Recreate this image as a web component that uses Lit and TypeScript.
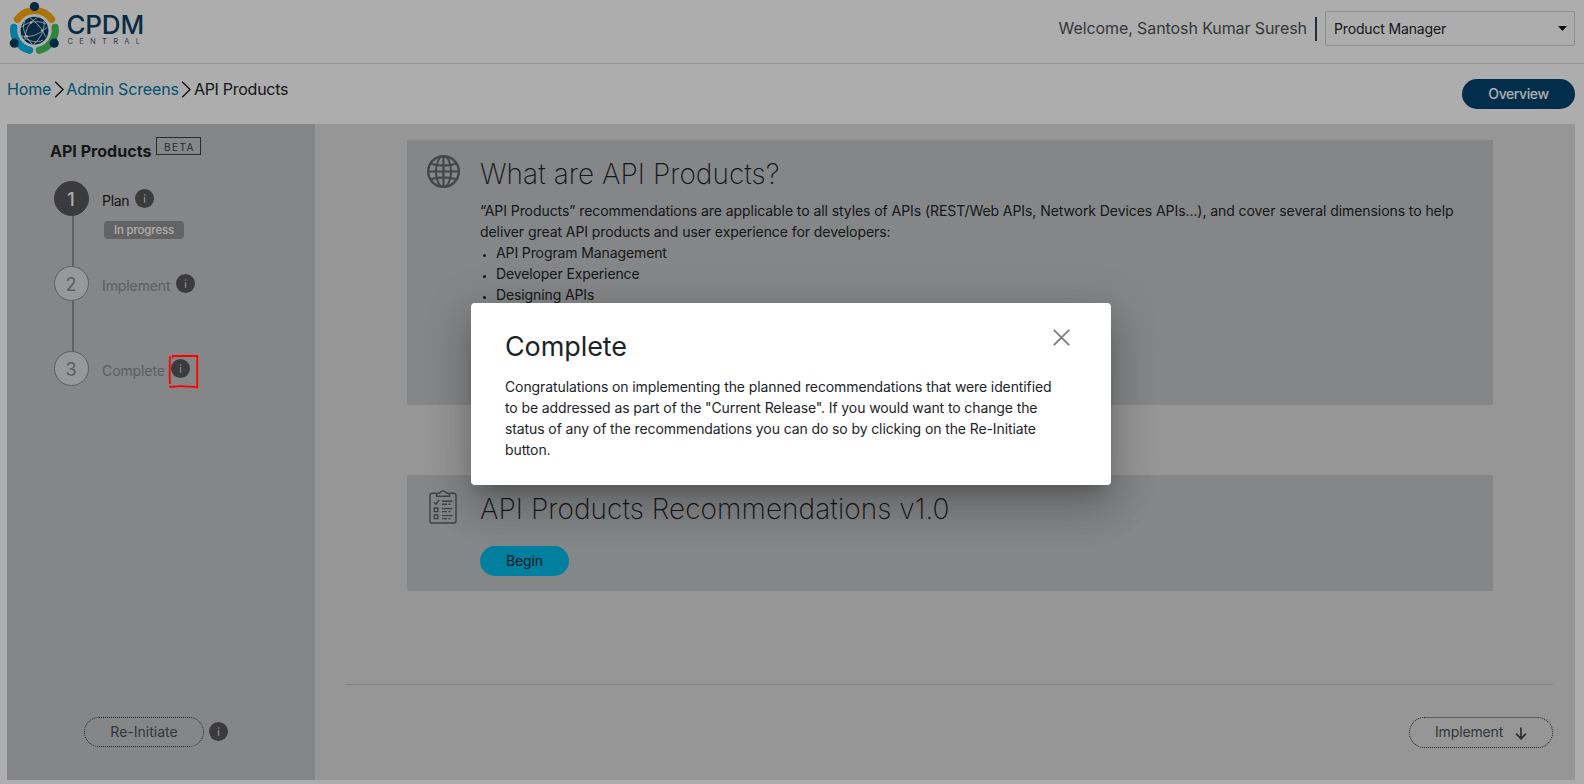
import { LitElement, html, svg, css, nothing } from "lit";
import { customElement, property } from "lit/decorators.js";
import { classMap } from "lit/directives/class-map.js";

@customElement("info-dot")
class InfoDot extends LitElement {
  static styles = css`
    :host { display: block; width: 19px; height: 19px; flex: none; }
    svg { display: block; }
  `;
  render() {
    return html`<svg width="19" height="19" viewBox="0 0 19 19">
      <circle cx="9.5" cy="9.5" r="9.5" fill="#58585b" />
      <rect x="8.9" y="5.3" width="1.3" height="1.5" fill="#c4c6c8" />
      <rect x="8.9" y="8" width="1.3" height="5.8" fill="#c4c6c8" />
    </svg>`;
  }
}

@customElement("cpdm-logo")
class CpdmLogo extends LitElement {
  static styles = css`
    :host { display: flex; height: 63px; }
    svg { display: block; flex: none; }
    .words { padding: 10.5px 0 0 1.5px; white-space: nowrap; color: #0a4068; }
    .name { font: 500 26px/27px Inter, sans-serif; letter-spacing: -0.2px; }
    .sub { font: 400 7.5px/7px Inter, sans-serif; letter-spacing: 6.3px; color: #4e6275; padding: 0 0 0 1px; }
  `;
  render() {
    return html`
      <svg width="65" height="60" viewBox="0 0 65 60" fill="none">
        <g stroke-width="7.2" stroke-linecap="round">
          <path d="M17.4 19.3A21 21 0 0 1 51.6 19.3" stroke="#fbab10" />
          <path d="M13.8 27.4A21 21 0 0 0 29.6 50.3" stroke="#00bceb" />
          <path d="M55.1 27.4A21 21 0 0 1 39.4 50.3" stroke="#45c45a" />
        </g>
        <g fill="#053f66">
          <circle cx="34.5" cy="6.6" r="4.6" />
          <circle cx="14.3" cy="43.2" r="4.6" />
          <circle cx="54.2" cy="43.2" r="4.6" />
          <circle cx="34.5" cy="30.6" r="13.9" />
        </g>
        <g stroke="#fff" stroke-width="0.8">
          <path d="M30 18C36 22 43 29 45.5 37M25 21C21 27 25 36 32 44M21.5 27C29 21 38 20 46 24M22 36C31 38 40 34 47.5 27M37.5 17.5C29 22 25 30 25 40M44 21C45 29 41 38 34 44M24 37C29 42 38 43 43 40" />
        </g>
        <g fill="#fff">
          <circle cx="31" cy="22.5" r="1.2" /><circle cx="42" cy="30.5" r="1.1" /><circle cx="26.5" cy="36" r="1.2" />
        </g>
      </svg>
      <div class="words"><div class="name">CPDM</div><div class="sub">CENTRAL</div></div>
    `;
  }
}

@customElement("step-item")
class StepItem extends LitElement {
  @property({ type: Number }) number = 1;
  @property() label = "";
  @property() status = "";
  @property({ type: Boolean }) active = false;
  @property({ type: Boolean }) last = false;

  static styles = css`
    :host { display: flex; height: 85px; }
    .rail { width: 35px; display: flex; flex-direction: column; align-items: center; }
    .circle {
      box-sizing: border-box; width: 35px; height: 35px; flex: none; border-radius: 50%;
      border: 1px solid #8b8b8d; background: #dfe0e2; color: #8a8b8d; padding: 1px 1px 0 0;
      font: 400 18px/33px Inter, sans-serif; text-align: center;
    }
    .circle.on { background: #58585b; border-color: #58585b; color: #fff; font-weight: 500; }
    .line { width: 2px; flex: 1; background: #8f8f91; margin-left: 3px; }
    .body { padding-left: 13px; }
    .row { display: flex; align-items: center; height: 35px; gap: 5.7px; }
    .text { font: 400 14px/20px Inter, sans-serif; letter-spacing: -0.1px; color: #8a8b8d; padding-top: 4px; }
    .text.on { color: #1d2024; letter-spacing: -0.3px; }
    .badge {
      margin: 5px 0 0 2px; width: 80px; height: 18px; border-radius: 4px; background: #929294; color: #fff;
      font: 500 11.5px/18px Inter, sans-serif; letter-spacing: -0.17px; text-align: center;
    }
  `;
  render() {
    return html`
      <div class="rail">
        <div class=${classMap({ circle: true, on: this.active })}>${this.number}</div>
        ${this.last ? nothing : html`<div class="line"></div>`}
      </div>
      <div class="body">
        <div class="row">
          <span class=${classMap({ text: true, on: this.active })}>${this.label}</span>
          <info-dot></info-dot>
        </div>
        ${this.status ? html`<div class="badge">${this.status}</div>` : nothing}
      </div>
    `;
  }
}

const globeIcon = svg`<svg width="33" height="33" viewBox="0 0 33 33" fill="none" stroke="#66676a" stroke-width="2">
  <circle cx="16.5" cy="16.5" r="15.3" stroke-width="2.4" />
  <ellipse cx="16.5" cy="16.5" rx="7.6" ry="15.4" />
  <path d="M16.5 1v31M1 16.5h31M3.8 8.8c7 2.4 18.4 2.4 25.4 0M3.8 24.2c7-2.4 18.4-2.4 25.4 0" stroke-width="2.2" />
</svg>`;

const checklistIcon = svg`<svg width="28" height="34" viewBox="0 0 28 34" fill="none" stroke="#606164" stroke-width="1.4">
  <path d="M7.5 3.2H3A2 2 0 0 0 1 5.2V31A2 2 0 0 0 3 33H25A2 2 0 0 0 27 31V5.2A2 2 0 0 0 25 3.2H20.5" />
  <path d="M7.5 6.2V4.8Q7.5 3.4 9 3.2L11 2.8C12 .2 16 .2 17 2.8L19 3.2Q20.5 3.4 20.5 4.8V6.2Z" />
  <path d="M5 12.3l1.8 1.9 3.4-4.2M5.2 18h3.6v3.6H5.2ZM5.2 25h3.6v3.6H5.2Z" />
  <path d="M13 11.3h10.5M13 14.3h5M19.5 14.3h2M13 18.6h10.5M13 21.6h5M19.5 21.6h2M13 25.6h10.5M13 28.6h5M19.5 28.6h2" />
</svg>`;

const chevron = svg`<svg class="chev" width="11" height="17" viewBox="0 0 11 17" fill="none" stroke="#1d2024" stroke-width="1.4"><path d="M1.2 .8L9 8.5L1.2 16.2" /></svg>`;

@customElement("app-root")
class AppRoot extends LitElement {
  static styles = css`
    :host { display: block; position: relative; width: 1584px; height: 784px; overflow: hidden; background: #fff; font-family: Inter, sans-serif; color: #1d2428; }
    * { box-sizing: border-box; }
    svg { display: block; flex: none; }
    header { display: flex; justify-content: space-between; height: 64px; border-bottom: 1px solid #d8d8d8; padding-right: 9px; }
    .user { display: flex; padding-top: 11px; }
    .welcome { font-size: 16px; line-height: 34px; letter-spacing: -0.09px; color: #4d5358; }
    .bar { width: 2px; height: 24px; background: #3a4350; margin: 6px 8px 0 8px; }
    .select {
      width: 250px; height: 35px; border: 1px solid #d2d2d2; border-radius: 2px; padding: 0 7px 0 8px;
      display: flex; align-items: center; justify-content: space-between; font-size: 14px; letter-spacing: -0.16px;
    }
    .crumbs { display: flex; justify-content: space-between; height: 60px; padding: 15px 9px 0 7px; }
    .trail { display: flex; align-items: center; height: 20px; font-size: 16px; line-height: 20px; letter-spacing: -0.14px; }
    .trail a { color: #007aa3; }
    .trail span { letter-spacing: -0.27px; }
    .chev { margin: 1px 1.5px 0 2.5px; }
    .pill { height: 30px; border-radius: 15px; line-height: 30px; text-align: center; font-size: 14px; }
    .overview { width: 113px; background: #044570; color: #fff; font-weight: 500; letter-spacing: -0.4px; }
    .main { display: flex; margin: 0 9px 0 7px; height: 656px; background: #ddd; }
    aside { width: 308px; background: #c4c6c8; display: flex; flex-direction: column; justify-content: space-between; padding: 13px 0 33px 43px; }
    .title { display: flex; gap: 5px; height: 44px; font-size: 16px; font-weight: 700; line-height: 28px; letter-spacing: 0.03px; }
    .beta { width: 45px; height: 18px; border: 1px solid #3c3f44; font-size: 10px; font-weight: 400; line-height: 19px; letter-spacing: 1.5px; text-align: center; padding: 0 0 0 1px; color: #3c3f44; }
    .steps { padding-left: 4px; }
    .again { display: flex; align-items: flex-start; gap: 5px; padding-left: 34px; }
    .again info-dot { margin-top: 5px; }
    .outline { border: 1px dotted #2c3035; color: #4a4f55; }
    .reinit { width: 120px; line-height: 28px; }
    .content { flex: 1; display: flex; flex-direction: column; padding: 16px 22px 32px 31px; }
    .card { display: flex; background: #c4c6c8; margin: 0 60px 0 61px; padding: 15px 16px 0 20px; }
    .intro { height: 265px; }
    .recs { height: 116px; margin-top: 70px; }
    .icon { width: 53px; }
    .recs .icon { padding-left: 2px; }
    .recs .icon svg { margin-top: -0.5px; }
    .text { flex: 1; }
    h1 { margin: 1px 0 8px; font-size: 28px; font-weight: 200; line-height: 36px; letter-spacing: 0.05px; }
    .recs h1 { margin: 1px 0 19px; letter-spacing: 0.06px; }
    p, ul { margin: 0; font-size: 14px; line-height: 21px; letter-spacing: -0.07px; }
    ul { padding-left: 16px; letter-spacing: -0.11px; }
    li::marker { font-size: 10px; }
    .begin { width: 89px; background: #00bceb; letter-spacing: -0.12px; }
    .foot { display: flex; justify-content: flex-end; margin-top: 93px; border-top: 1px solid #c4c4c4; padding-top: 32px; }
    .next { width: 144px; height: 31px; line-height: 28px; border-radius: 16px; display: flex; align-items: flex-start; gap: 12px; padding-left: 25px; letter-spacing: -0.14px; }
    .next svg { margin-top: 9px; }
    .overlay { position: absolute; inset: 0; background: rgba(0, 0, 0, 0.32); display: flex; justify-content: center; align-items: flex-start; padding: 303px 2px 0 0; }
    .dialog {
      width: 640px; height: 182px; background: #fff; border-radius: 4px; padding: 26px 40px 0 34px; display: flex; justify-content: space-between;
      box-shadow: 0 11px 15px -7px rgba(0, 0, 0, 0.2), 0 24px 38px 3px rgba(0, 0, 0, 0.14), 0 9px 46px 8px rgba(0, 0, 0, 0.12);
    }
    h2 { margin: 0 0 11px; font-size: 27px; font-weight: 400; line-height: 36px; letter-spacing: -0.1px; }
    .msg { width: 554px; }
    .msg p { letter-spacing: -0.105px; }
    .close { margin: -0.5px 1.5px 0 0; }
    .mark { position: absolute; left: 168px; top: 354px; }
  `;

  render() {
    return html`
      <header>
        <cpdm-logo></cpdm-logo>
        <div class="user">
          <span class="welcome">Welcome, Santosh Kumar Suresh</span>
          <span class="bar"></span>
          <div class="select">Product Manager
            <svg width="9" height="5" viewBox="0 0 9 5"><path d="M0 0H9L4.5 5Z" fill="#15181c" /></svg>
          </div>
        </div>
      </header>
      <div class="crumbs">
        <nav class="trail"><a>Home</a>${chevron}<a>Admin Screens</a>${chevron}<span>API Products</span></nav>
        <div class="pill overview">Overview</div>
      </div>
      <div class="main">
        <aside>
          <div>
            <div class="title"><span>API Products</span><span class="beta">BETA</span></div>
            <div class="steps">
              <step-item number="1" label="Plan" status="In progress" active></step-item>
              <step-item number="2" label="Implement"></step-item>
              <step-item number="3" label="Complete" last></step-item>
            </div>
          </div>
          <div class="again"><div class="pill outline reinit">Re-Initiate</div><info-dot></info-dot></div>
        </aside>
        <div class="content">
          <section class="card intro">
            <div class="icon">${globeIcon}</div>
            <div class="text">
              <h1>What are API Products?</h1>
              <p>“API Products” recommendations are applicable to all styles of APIs (REST/Web APIs, Network Devices APIs...), and cover several dimensions to help deliver great API products and user experience for developers:</p>
              <ul><li>API Program Management</li><li>Developer Experience</li><li>Designing APIs</li></ul>
            </div>
          </section>
          <section class="card recs">
            <div class="icon">${checklistIcon}</div>
            <div class="text">
              <h1>API Products Recommendations v1.0</h1>
              <div class="pill begin">Begin</div>
            </div>
          </section>
          <div class="foot">
            <div class="pill outline next">Implement
              <svg width="12" height="13" viewBox="0 0 12 13" fill="none" stroke="#41464c" stroke-width="1.7"><path d="M6 .5V11.5M1 6.7L6 11.7L11 6.7" /></svg>
            </div>
          </div>
        </div>
      </div>
      <div class="overlay">
        <div class="dialog">
          <div class="msg">
            <h2>Complete</h2>
            <p>Congratulations on implementing the planned recommendations that were identified to be addressed as part of the "Current Release". If you would want to change the status of any of the recommendations you can do so by clicking on the Re-Initiate button.</p>
          </div>
          <svg class="close" width="17" height="17" viewBox="0 0 17 17" stroke="#7d7d7d" stroke-width="1.8"><path d="M.8 .8L16.2 16.2M16.2 .8L.8 16.2" /></svg>
        </div>
      </div>
      <svg class="mark" width="32" height="36" viewBox="0 0 32 36" fill="none" stroke="#f00" stroke-width="1.8">
        <path d="M1.9 2.3L1.6 22L2 30M4.5 4.3L4.8 2H29.2V34.5M1.2 33L13 32.2L29 33.2" />
      </svg>
    `;
  }
}
